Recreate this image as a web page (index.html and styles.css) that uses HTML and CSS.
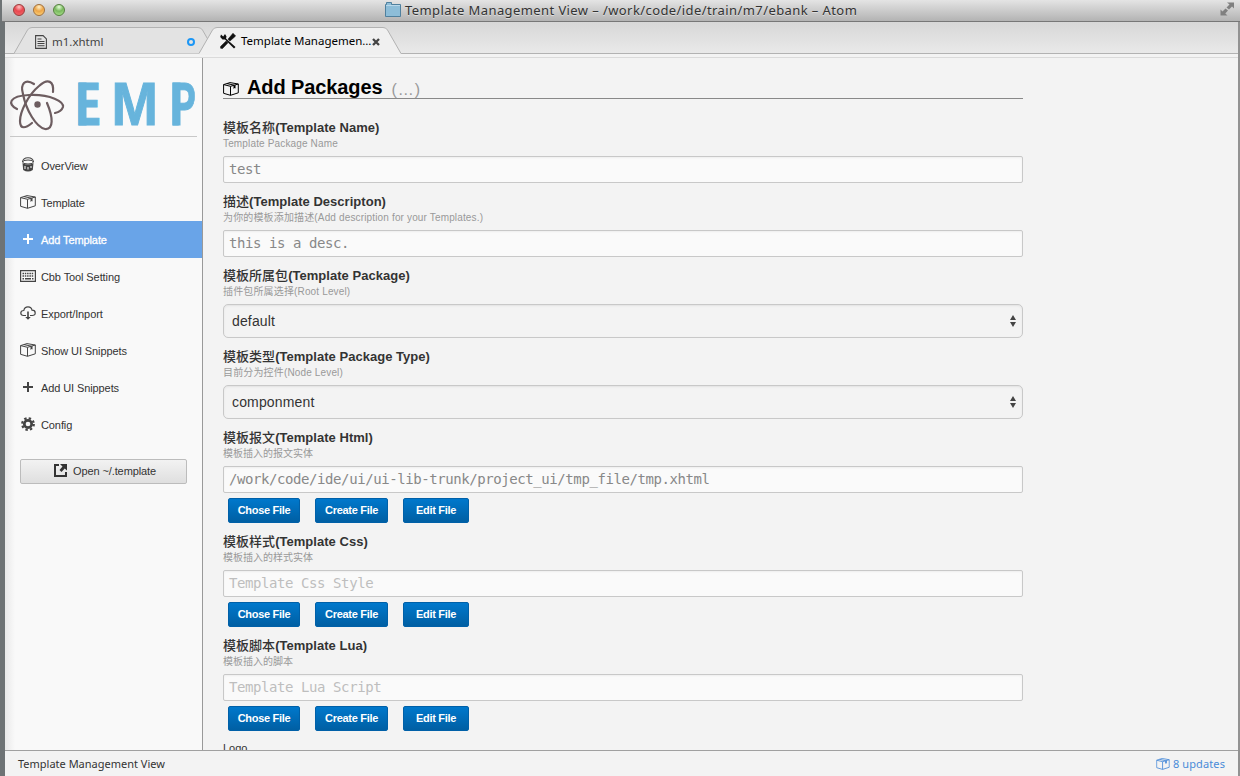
FILE: index.html
```html
<!DOCTYPE html>
<html lang="zh-CN">
<head>
<meta charset="utf-8">
<title>Template Management View</title>
<link rel="stylesheet" href="styles.css">
</head>
<body>
<svg class="defs" width="0" height="0">
  <symbol id="package" viewBox="0 0 16 14"><path d="M.6 2.600 7 .6l8.300 1.400v8.800L7.500 13.300.6 11.300zM.6 2.600l6.900 1.700 7.800-2.300M7.500 4.300v9M4 1.600l7.300 1.600" fill="none" stroke="currentColor"/><path d="M10.500 3.600l2-.6v3.600l-1-.7-1 1.200z" fill="currentColor"/></symbol>
  <symbol id="plus" viewBox="0 0 16 14"><path d="M7 2h2v4h4v2H9v4H7V8H3V6h4z" fill="currentColor"/></symbol>
</svg>
<div class="window">
  <header class="titlebar">
    <div class="lights"><i class="light red"></i><i class="light amber"></i><i class="light green"></i></div>
    <div class="title">
      <svg class="folder" width="16" height="15" viewBox="0 0 16 15"><path d="M.5 14.5v-12h1v-2h5v2h9v12z" fill="#8dbdd8" stroke="#4f809e"/><path d="M1 3.5h14" stroke="#b9d8ea"/></svg>
      <span class="title-text">Template Management View – /work/code/ide/train/m7/ebank – Atom</span>
    </div>
    <svg class="expand" width="15" height="15" viewBox="0 0 15 15"><path d="M7 .5h7v6l-2-2-3 3L6.500 5.500l3-3zM.500 7.500v6h7l-2.200-2 2.700-3L5.500 6.500l-3 3z" fill="#808080"/></svg>
  </header>
  <nav class="tabs">
    <div class="tab">
      <svg class="tab-shape" width="202" height="27" viewBox="0 0 202 27"><path d="M0 26.500 13.500 3Q15 .5 18 .5H184Q187 .5 188.500 3L202 26.500" fill="#e3e3e3" stroke="#b2b2b2"/></svg>
      <svg class="tab-file" width="12" height="14" viewBox="0 0 12 14"><path d="M.6.6h7.500l3.300 3.300v9.500H.6zM2.500 4h4M2.500 6.500h7M2.500 8.500h7M2.500 10.800h7" fill="none" stroke="#444" stroke-width="1.100"/></svg>
      <span class="tab-name file-name">m1.xhtml</span>
      <i class="modified"></i>
    </div>
    <div class="tab active">
      <svg class="tab-shape" width="202" height="28" viewBox="0 0 202 28"><path d="M0 28V26.500L13.500 3Q15 .5 18 .5H184Q187 .5 188.500 3L202 26.500V28" fill="#f0f0f0"/><path d="M0 26.500 13.500 3Q15 .5 18 .5H184Q187 .5 188.500 3L202 26.500" fill="none" stroke="#b2b2b2"/></svg>
      <svg class="tab-tools" width="16" height="16" viewBox="0 0 16 16"><path d="M1 1.500 3.200 3.600 5 1 6.500 3.500 6 5.500 15.500 14 14 15.500 5 6.500 2.500 6.500.200 4z" fill="#111"/><path d="M13 .3 15.600 3 10 8 8 6.200zM6.200 8 8 9.700 2.500 15.500.6 15.200.6 13.400z" fill="#111" stroke="#111" stroke-width=".6"/></svg>
      <span class="tab-name active-name">Template Managemen…</span>
      <svg class="close" width="8" height="8" viewBox="0 0 8 8"><path d="M1 1l6 6M7 1 1 7" stroke="#444" stroke-width="2.300"/></svg>
    </div>
  </nav>
  <div class="workspace">
    <aside class="sidebar">
      <div class="brand">
        <svg width="188" height="60" viewBox="0 0 188 60">
          <g fill="none" stroke="#6d5d60" stroke-width="2.200" stroke-linecap="round">
            <path d="M7 34C-3 29-1 21 19 20c22-1 35 7 34 12-1 3-4 5-8 6"/>
            <path d="M24 9C15 3 10 9 13 19c3 16 13 33 22 35 9 1 8-12 2-26"/>
            <path d="M43 17C44 6 38 3 29 11 18 20 10 37 10 46c0 9 6 7 12 2"/>
          </g>
          <circle cx="27.500" cy="29.500" r="3.200" fill="#6d5d60"/>
          <g class="letters">
            <rect x="69" y="8" width="7" height="42"/>
            <rect x="163" y="8" width="7" height="42"/>
            <text transform="translate(66 50) scale(.59 1)">E</text>
            <text transform="translate(101.500 50) scale(.9 1)">M</text>
            <text transform="translate(160.300 50) scale(.62 1)">P</text>
          </g>
        </svg>
      </div>
      <ul class="menu">
        <li><svg width="16" height="16" viewBox="0 0 16 16"><path d="M2.500 5Q3 .8 8 .8T13.500 5" fill="none" stroke="#444" stroke-width="1.100"/><ellipse cx="8" cy="5" rx="5.400" ry="2" fill="none" stroke="#444"/><path d="M2.500 6q5.500 3 11 0l-.7 7q-4.800 3-9.600 0z" fill="#444"/><path d="M5 9v3M8 10v2.500M11 9v2" stroke="#fff"/></svg><span>OverView</span></li>
        <li><svg width="16" height="14"><use href="#package"/></svg><span>Template</span></li>
        <li class="selected"><svg width="16" height="14"><use href="#plus"/></svg><span>Add Template</span></li>
        <li><svg width="16" height="14" viewBox="0 0 16 14"><path d="M.6 1.600h14.800v10.800H.6z" fill="none" stroke="#444" stroke-width="1.200"/><path d="M2.500 4.500h11M2.500 7h11" stroke="#444" stroke-width="1.600" stroke-dasharray="1.500 .8"/><path d="M2.500 9.800h1.500M5 9.800h6M12 9.800h1.500" stroke="#444" stroke-width="1.500"/></svg><span>Cbb Tool Setting</span></li>
        <li><svg width="16" height="14" viewBox="0 0 16 14"><path d="M6 9.500H3.500Q.8 9.500.8 7t3-2.500Q4.500.8 8 .8t4 3.400q3.200 0 3.200 2.700T12 9.500H10" fill="none" stroke="#444" stroke-width="1.200"/><path d="M7.200 5.500h1.600V11h2L8 13.800 5.200 11h2z" fill="#444"/></svg><span>Export/Inport</span></li>
        <li><svg width="16" height="14"><use href="#package"/></svg><span>Show UI Snippets</span></li>
        <li><svg width="16" height="14"><use href="#plus"/></svg><span>Add UI Snippets</span></li>
        <li><svg width="16" height="14" viewBox="0 0 16 14"><circle cx="8" cy="7" r="3.700" fill="none" stroke="#444" stroke-width="2.700"/><circle cx="8" cy="7" r="5.800" fill="none" stroke="#444" stroke-width="2.200" stroke-dasharray="2.400 2.155"/></svg><span>Config</span></li>
      </ul>
      <button class="open"><svg width="13" height="13" viewBox="0 0 13 13"><path d="M5 1H1v11h11V8" fill="none" stroke="#333" stroke-width="2"/><path d="M6 0h7v6.500l-2.300-2L7.500 8 5.500 6l3-3.500z" fill="#333"/></svg><span>Open ~/.template</span></button>
    </aside>
    <main class="panel">
      <h1 class="heading"><svg width="16" height="14"><use href="#package"/></svg><span>Add Packages</span><small>(…)</small></h1>
      <section class="field"><label><b>模板名称</b>(Template Name)</label><p>Template Package Name</p><div class="input">test</div></section>
      <section class="field"><label><b>描述</b>(Template Descripton)</label><p>为你的模板添加描述<span>(Add description for your Templates.)</span></p><div class="input">this is a desc.</div></section>
      <section class="field"><label><b>模板所属包</b>(Template Package)</label><p>插件包所属选择(Root Level)</p><div class="select"><span>default</span><svg width="6" height="12" viewBox="0 0 6 12"><path d="M0 5 3 0l3 5zM0 7h6l-3 5z" fill="#444"/></svg></div></section>
      <section class="field"><label><b>模板类型</b>(Template Package Type)</label><p>目前分为控件(Node Level)</p><div class="select"><span>componment</span><svg width="6" height="12" viewBox="0 0 6 12"><path d="M0 5 3 0l3 5zM0 7h6l-3 5z" fill="#444"/></svg></div></section>
      <section class="field"><label><b>模板报文</b>(Template Html)</label><p class="han">模板插入的报文实体</p><div class="input">/work/code/ide/ui/ui-lib-trunk/project_ui/tmp_file/tmp.xhtml</div>
        <div class="actions"><button class="chose">Chose File</button><button class="create">Create File</button><button class="edit">Edit File</button></div></section>
      <section class="field"><label><b>模板样式</b>(Template Css)</label><p class="han">模板插入的样式实体</p><div class="input placeholder">Template Css Style</div>
        <div class="actions"><button class="chose">Chose File</button><button class="create">Create File</button><button class="edit">Edit File</button></div></section>
      <section class="field"><label><b>模板脚本</b>(Template Lua)</label><p class="han">模板插入的脚本</p><div class="input placeholder">Template Lua Script</div>
        <div class="actions"><button class="chose">Chose File</button><button class="create">Create File</button><button class="edit">Edit File</button></div></section>
      <div class="logo-label">Logo</div>
    </main>
  </div>
  <footer class="status"><span class="status-name">Template Management View</span><span class="updates"><svg width="14" height="12" viewBox="0 0 16 14"><use href="#package"/></svg><span>8 updates</span></span></footer>
</div>
</body>
</html>
```

FILE: styles.css
```css
* { box-sizing: border-box; }
body {
  margin: 0;
  width: 1240px;
  height: 776px;
  overflow: hidden;
  font-family: "Liberation Sans", "Noto Sans CJK SC", sans-serif;
  color: #333;
  background: #666;
}
.defs { position: absolute; }
svg { flex: none; display: block; overflow: visible; }
.window {
  display: flex;
  flex-direction: column;
  height: 776px;
  border-left: 5px solid #6e7375;
  border-right: 2px solid #929292;
  background: #f3f3f3;
}
.window .titlebar { margin-left: -3px; margin-right: -2px; }
.titlebar {
  display: flex;
  align-items: center;
  justify-content: space-between;
  flex: none;
  height: 22px;
  padding: 0 5px 2px 11px;
  border-bottom: 1px solid #777;
  background: linear-gradient(#e4e4e4, #b3b3b3);
}
.lights { display: flex; gap: 8px; }
.light { width: 12px; height: 12px; border-radius: 50%; border: 1px solid; }
.red { border-color: #9c3b3b; background: radial-gradient(circle at 50% 20%, #ffc0c0, #e94850 45%, #f06a6c); }
.amber { border-color: #a2703c; background: radial-gradient(circle at 50% 20%, #fff0c8, #eda547 45%, #ffdb84); }
.green { border-color: #55803f; background: radial-gradient(circle at 50% 20%, #e5ffd8, #79b85e 45%, #b1e894); }
.title { display: flex; align-items: center; gap: 4px; margin-left: -43px; }
.title-text, .tab-name, .status { font-family: "Noto Sans", sans-serif; white-space: nowrap; }
.title-text { width: 452px; font-size: 13px; line-height: 18px; letter-spacing: .41px; text-shadow: 0 1px #ddd; }
.tabs {
  display: flex;
  flex: none;
  align-items: flex-end;
  height: 32px;
  padding-left: 9px;
  border-bottom: 1px solid #b2b2b2;
  background: linear-gradient(#d7d7d7, #e9e9e9);
}
.tab {
  position: relative;
  display: flex;
  align-items: center;
  width: 202px;
  height: 26px;
  padding: 3px 0 0 21px;
}
.tab-shape { position: absolute; left: 0; top: 0; }
.tab > :not(.tab-shape) { position: relative; }
.tab.active { margin-left: -17px; padding-top: 2px; }
.tab-name { font-size: 11.5px; line-height: 16px; }
.file-name { width: 130px; margin-left: 5px; color: #444; }
.active-name { width: 131px; margin-left: 5px; color: #000; }
.modified { width: 8px; height: 8px; margin-top: 1px; border: 2px solid #1b96f5; border-radius: 50%; margin-left: 5px; }
.close { margin-top: 2px; }
.workspace {
  display: flex;
  flex: none;
  height: 694px;
  margin-top: 3px;
  overflow: hidden;
  border-top: 1px solid #dadada;
  border-bottom: 1px solid #a0a0a0;
}
.sidebar {
  flex: none;
  width: 198px;
  border-right: 1px solid #999;
  background: linear-gradient(90deg, #e9e9e9, #f9f9f9 10px);
}
.brand { height: 79px; margin: 0 5px; padding-top: 17px; border-bottom: 1px solid #c8c8c8; }
.letters { font: bold 62px/60px "Liberation Sans", sans-serif; fill: #67b4dc; stroke: #67b4dc; stroke-width: 1px; }
.menu { margin: 10px 0 0; padding: 0; list-style: none; font-size: 11px; letter-spacing: -.1px; }
.menu li { display: flex; align-items: center; gap: 5px; height: 37px; padding-left: 15px; color: #333; }
.menu li svg { margin-top: -2px; color: #444; }
.menu .selected { color: #fff; background: #69a4e8; }
.menu .selected svg { color: #fff; }
.menu .selected span { -webkit-text-stroke: .3px #fff; }
button { font-family: inherit; font-size: 11px; padding: 0; white-space: nowrap; }
.open {
  display: flex;
  align-items: center;
  justify-content: center;
  gap: 6px;
  width: 167px;
  height: 25px;
  margin: 16px 0 0 15px;
  padding: 0 0 1px 3px;
  border: 1px solid #bcbcbc;
  border-radius: 2px;
  color: #333;
  letter-spacing: -.1px;
  background: linear-gradient(#f2f2f2, #dfdfdf);
}
.open svg { margin-top: -2px; }
.panel { width: 820px; padding: 18px 0 0 20px; background: #f3f3f3; }
.heading {
  display: flex;
  align-items: center;
  height: 23px;
  margin: 0 0 20px;
  border-bottom: 1px solid #888;
  font-size: 20px;
  line-height: 23px;
  color: #000;
  letter-spacing: -.1px;
}
.heading svg { margin: 4px 8px 0 0; }
.heading span { padding-top: 1px; }
.heading small { margin: 4px 0 0 9px; font-size: 16px; font-weight: 400; color: #999; letter-spacing: 1px; }
.field { margin-bottom: 10px; }
.field label { display: block; height: 18px; font-size: 13px; font-weight: 700; line-height: 18px; white-space: nowrap; letter-spacing: .03px; }
.field label b { font-weight: 500; }
.field p { height: 14px; margin: 0 0 5px; font-size: 10px; line-height: 14px; color: #999; white-space: nowrap; letter-spacing: .15px; }
.field .han { letter-spacing: 0; }
.input {
  height: 27px;
  padding: 0 5px;
  border: 1px solid #c8c8c8;
  border-radius: 2px;
  background: #fafafa;
  box-shadow: inset 0 1px 2px #eee;
  font: 14px/25px "DejaVu Sans Mono", monospace;
  letter-spacing: -.42px;
  color: #888;
}
.placeholder { color: #bebebe; }
.select {
  display: flex;
  align-items: center;
  justify-content: space-between;
  height: 34px;
  padding: 0 6px 0 8px;
  border: 1px solid #c8c8c8;
  border-radius: 5px;
  box-shadow: inset 0 1px 2px #e2e2e2;
  font-size: 14px;
  letter-spacing: .15px;
}
.actions { display: flex; padding: 5px 0 0 5px; }
.actions button {
  height: 25px;
  padding-bottom: 1px;
  border: 1px solid #0060a8;
  border-radius: 2px;
  color: #fff;
  font-weight: 700;
  letter-spacing: -.3px;
  background: linear-gradient(#0078cc, #005fa3);
}
.chose { width: 72px; }
.create { width: 73px; margin-left: 15px; }
.edit { width: 66px; margin-left: 15px; }
.logo-label { font-size: 11px; line-height: 14px; }
.status { display: flex; align-items: center; justify-content: space-between; height: 25px; padding: 0 13px; font-size: 11px; }
.updates { display: flex; align-items: center; gap: 3px; color: #4a8bd8; letter-spacing: .1px; }
```
